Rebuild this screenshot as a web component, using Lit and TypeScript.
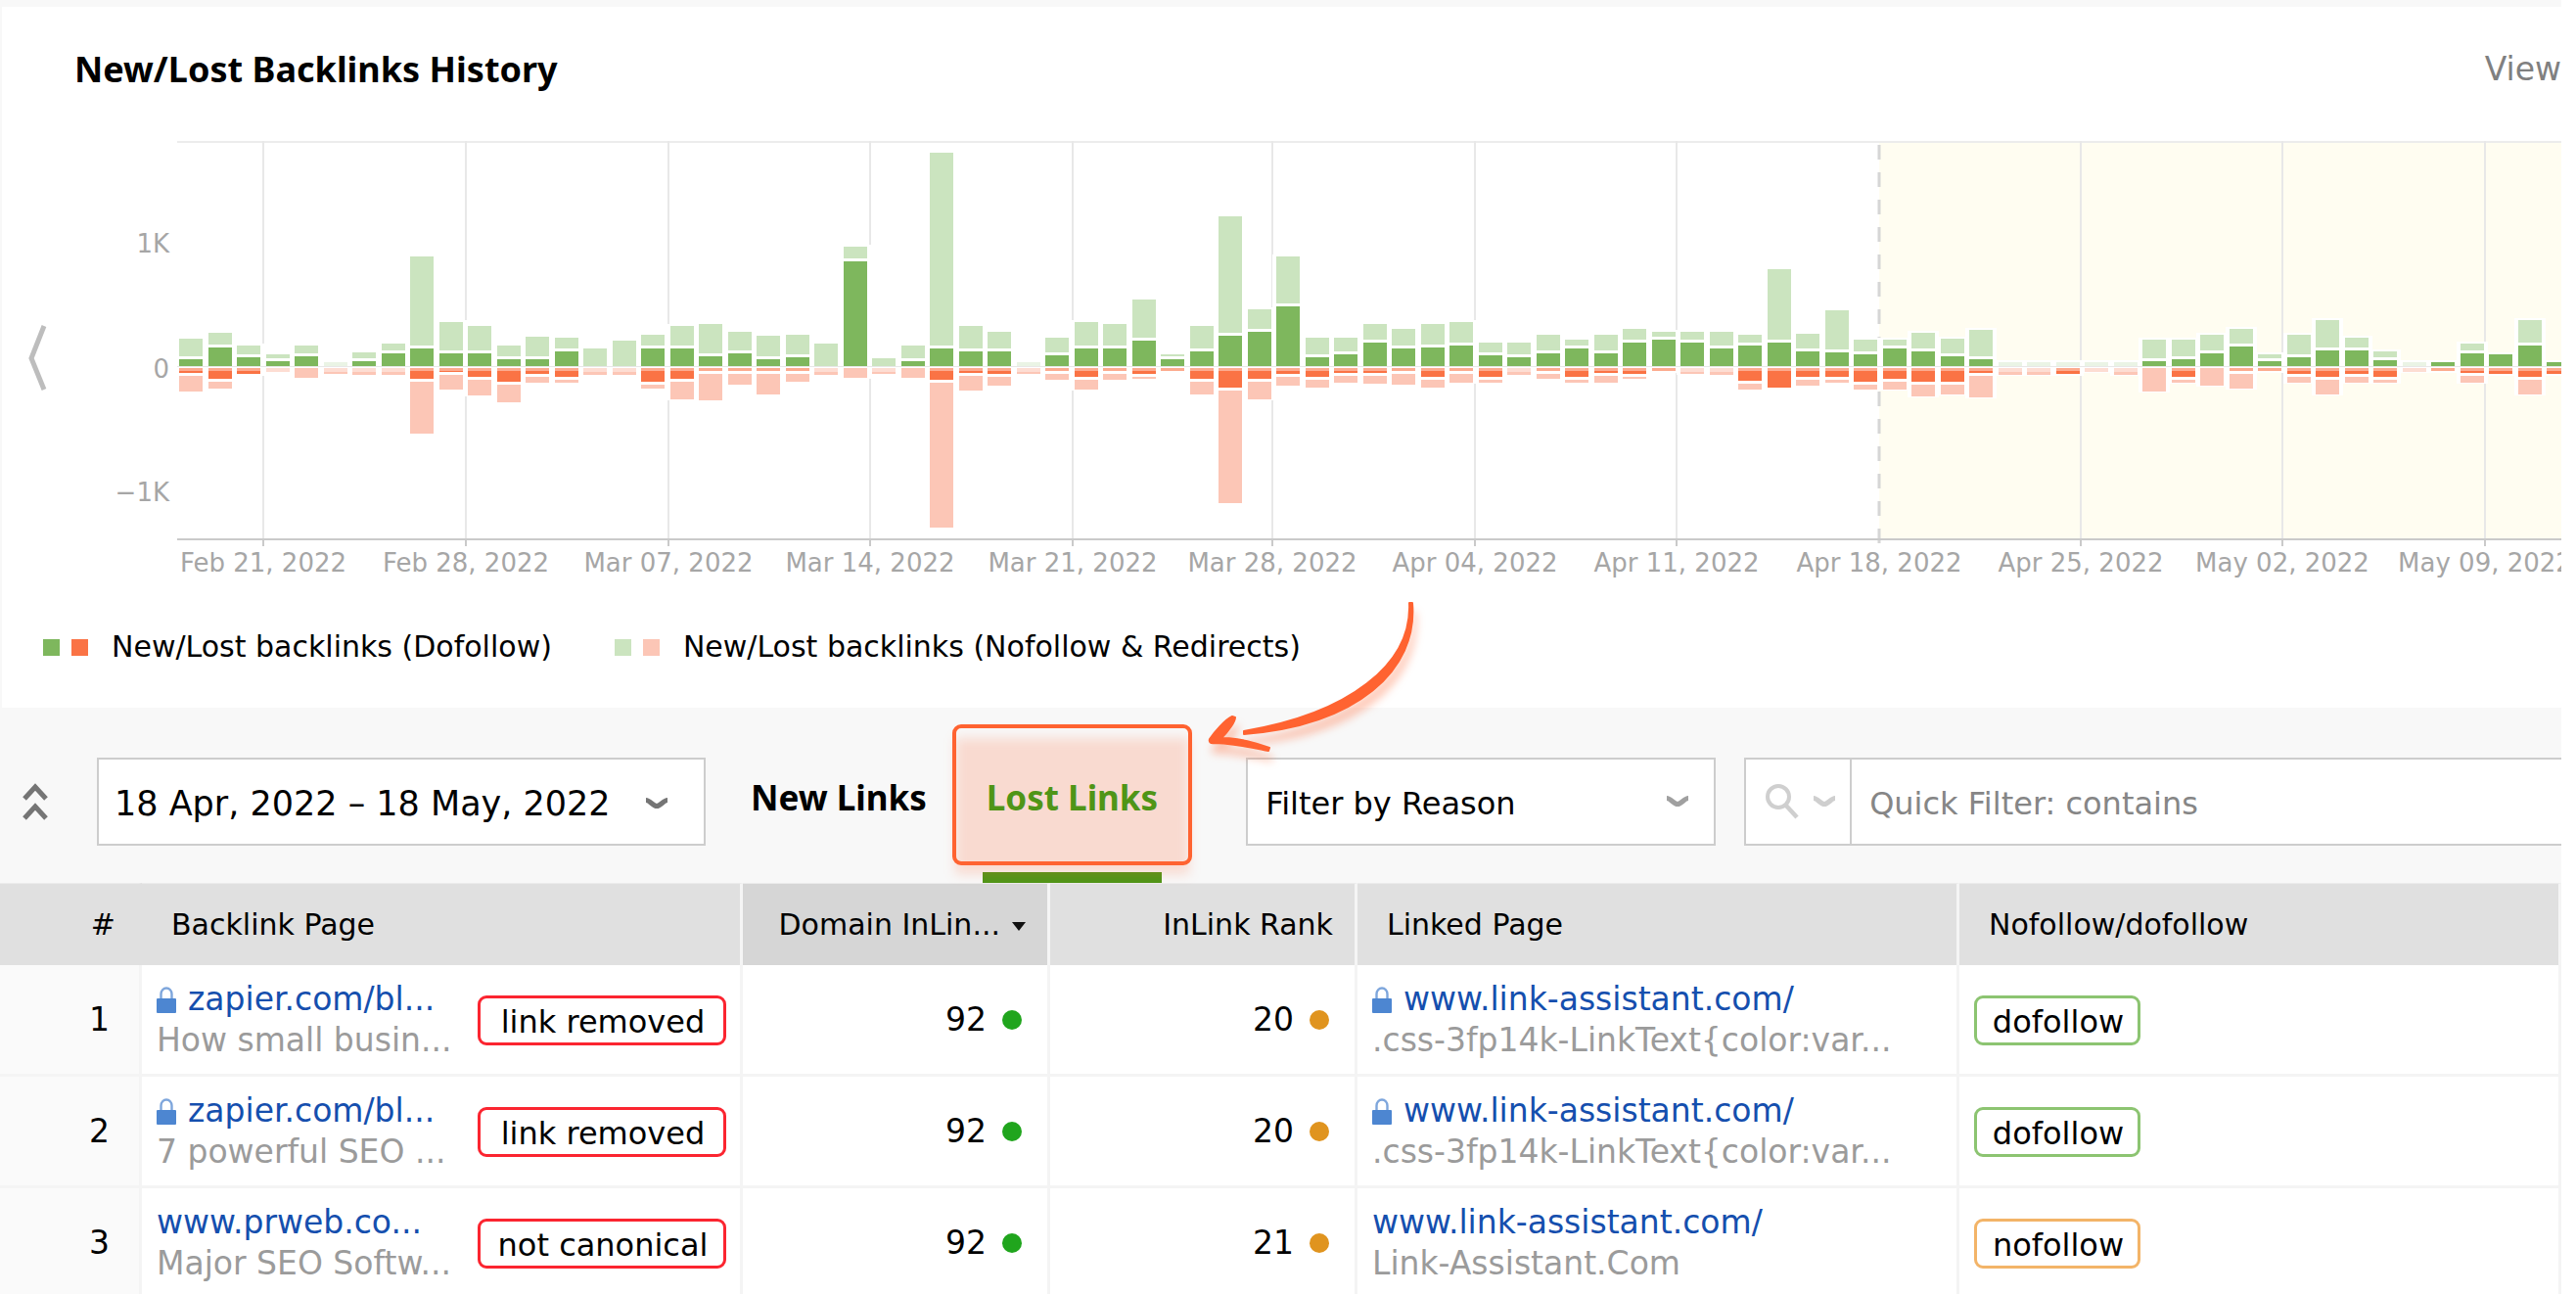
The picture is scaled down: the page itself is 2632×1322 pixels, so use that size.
import { LitElement, html, css, svg } from "lit";
import { customElement, state } from "lit/decorators.js";
import { classMap } from "lit/directives/class-map.js";

/* One day: new total, new dofollow, lost dofollow, lost total (381 units = 1K links). */
type Day = [number, number, number, number];

const DAYS: Day[] = [
  [83, 20, 22, 75], [101, 58, 38, 67], [63, 28, 24, 0], [36, 14, 0, 14],
  [63, 30, 0, 32], [11, 0, 0, 20], [43, 14, 0, 24], [70, 38, 0, 24],
  [336, 54, 38, 204], [136, 38, 19, 70], [123, 38, 32, 87], [63, 20, 47, 109],
  [91, 20, 24, 49], [88, 45, 32, 49], [54, 0, 0, 24], [79, 0, 0, 24],
  [95, 54, 49, 65], [123, 53, 38, 100], [130, 30, 14, 102], [105, 38, 14, 55],
  [93, 22, 14, 83], [95, 27, 14, 44], [70, 0, 0, 24], [366, 320, 0, 32],
  [24, 0, 0, 20], [63, 14, 0, 32], [654, 54, 41, 493], [123, 45, 22, 73],
  [106, 45, 24, 57], [13, 0, 0, 22], [88, 32, 14, 39], [136, 53, 32, 70],
  [130, 53, 14, 39], [203, 79, 24, 33], [37, 20, 14, 0], [123, 46, 38, 84],
  [459, 93, 65, 417], [175, 106, 38, 100], [336, 182, 24, 57], [86, 28, 32, 62],
  [88, 37, 22, 47], [130, 71, 22, 50], [115, 54, 14, 54], [130, 58, 32, 62],
  [136, 62, 14, 49], [72, 32, 32, 47], [72, 27, 0, 24], [95, 38, 14, 35],
  [81, 54, 32, 49], [95, 38, 22, 49], [113, 72, 24, 35], [106, 80, 15, 0],
  [105, 72, 0, 22], [106, 53, 0, 24], [96, 63, 45, 69], [298, 72, 67, 0],
  [98, 45, 32, 57], [170, 42, 32, 49], [81, 36, 49, 69], [81, 54, 38, 69],
  [103, 45, 47, 89], [83, 29, 49, 83], [111, 22, 22, 92], [11, 0, 0, 24],
  [11, 0, 0, 24], [11, 0, 24, 0], [11, 0, 0, 14], [11, 0, 0, 24],
  [81, 14, 0, 75], [81, 20, 32, 47], [95, 38, 0, 57], [114, 61, 14, 66],
  [37, 16, 14, 0], [95, 28, 25, 47], [140, 47, 32, 83], [88, 47, 24, 47],
  [45, 18, 32, 49], [13, 0, 0, 15], [13, 13, 14, 0], [70, 38, 22, 49],
  [35, 35, 24, 0], [140, 62, 32, 83], [13, 13, 24, 0],
];

const WEEKS: [number, string][] = [
  [159, "Feb 21, 2022"], [366, "Feb 28, 2022"], [573, "Mar 07, 2022"],
  [779, "Mar 14, 2022"], [986, "Mar 21, 2022"], [1190, "Mar 28, 2022"],
  [1397, "Apr 04, 2022"], [1603, "Apr 11, 2022"], [1810, "Apr 18, 2022"],
  [2016, "Apr 25, 2022"], [2222, "May 02, 2022"], [2429, "May 09, 2022"],
];

const CHART = { left: 71, top: 14, zero: 244, bottom: 421, first: 73, step: 29.5, bar: 24 };
const RANGE_START = 1810;

@customElement("history-chart")
export class HistoryChart extends LitElement {
  static styles = css`
    :host {
      display: block;
      min-width: 0;
    }
    svg {
      display: block;
      width: 100%;
      height: 470px;
      overflow: hidden;
    }
    text {
      font: 26px "DejaVu Sans", sans-serif;
      fill: #a6a6a6;
    }
    .day { text-anchor: middle; }
    .tick { text-anchor: end; }
    .grid { fill: #e8e8e8; }
    .frame { fill: #ececec; }
    .axis { fill: #cacaca; }
    .range { fill: #fffdf1; }
    .range-start {
      stroke: #d6d6d6;
      stroke-width: 3;
      stroke-dasharray: 15 13;
    }
    .halo { fill: #fff; }
    .new { fill: #7eb75d; }
    .new-soft { fill: #cbe4bf; }
    .lost { fill: #fa7345; }
    .lost-soft { fill: #fcc6b6; }
    .fade { fill: #fff; opacity: 0.4; }
    .faint { opacity: 0.4; }
  `;

  private bar(d: Day, i: number) {
    const px = (v: number) => Math.round(v / 3);
    const [up, upDark, downDark, down] = d.map(px);
    const { zero, first, step, bar } = CHART;
    const x = Math.round(first + i * step);
    const deep = Math.max(down, downDark);
    const gapUp = upDark ? 3 : 0;
    const gapDown = downDark ? 2 : 1;
    return svg`
      <rect class="halo" x=${x - 4} y=${zero - up - 2} width=${bar + 8} height=${up + deep + 4}></rect>
      ${up > upDark + gapUp
        ? svg`<rect class=${up < 5 ? "new-soft faint" : "new-soft"} x=${x} y=${zero - up} width=${bar}
            height=${up - upDark - gapUp}></rect>`
        : null}
      ${upDark ? svg`<rect class="new" x=${x} y=${zero - upDark} width=${bar} height=${upDark}></rect>` : null}
      ${downDark
        ? svg`<rect class="lost" x=${x} y=${zero + 2} width=${bar} height=${downDark - 2}></rect>
            <rect class="fade" x=${x} y=${zero + 2} width=${bar} height="3"></rect>`
        : null}
      ${down > downDark + gapDown
        ? svg`<rect class="lost-soft" x=${x} y=${zero + downDark + gapDown + 1} width=${bar}
            height=${Math.max(2, down - downDark - gapDown)}></rect>`
        : null}
      ${down > 0 && down < 9 && !downDark
        ? svg`<rect class="fade" x=${x} y=${zero + 2} width=${bar} height="4"></rect>`
        : null}
    `;
  }

  render() {
    const { left, top, zero, bottom } = CHART;
    return html`<svg role="img" aria-label="New and lost backlinks per day">
      <rect class="range" x=${RANGE_START} y=${top} width="100%" height=${bottom - top}></rect>
      <rect class="frame" x=${left} y=${top} width="100%" height="2"></rect>
      ${WEEKS.map(([x]) =>
        x === RANGE_START
          ? svg`<line class="range-start" x1=${x} x2=${x} y1=${top + 4} y2=${bottom + 7}></line>`
          : svg`<rect class="grid" x=${x - 1} y=${top} width="2" height=${bottom - top}></rect>
              <rect class="axis" x=${x - 1} y=${bottom} width="2" height="7"></rect>`
      )}
      ${DAYS.map((d, i) => this.bar(d, i))}
      <rect class="grid" x=${left} y=${zero} width="100%" height="1"></rect>
      <rect class="axis" x=${left} y=${bottom - 1} width="100%" height="2"></rect>
      <text class="tick" x="63" y="128">1K</text>
      <text class="tick" x="63" y="256">0</text>
      <text class="tick" x="63" y="382">−1K</text>
      ${WEEKS.map(([x, label]) => svg`<text class="day" x=${x} y="454">${label}</text>`)}
    </svg>`;
  }
}

interface Link {
  page: string;
  title: string;
  secure: boolean;
  reason: string;
  domainRank: number;
  rank: number;
  target: string;
  anchor: string;
  follow: "dofollow" | "nofollow";
}

const LINKS: Link[] = [
  {
    page: "zapier.com/bl...", title: "How small busin...", secure: true, reason: "link removed",
    domainRank: 92, rank: 20, target: "www.link-assistant.com/",
    anchor: ".css-3fp14k-LinkText{color:var...", follow: "dofollow",
  },
  {
    page: "zapier.com/bl...", title: "7 powerful SEO ...", secure: true, reason: "link removed",
    domainRank: 92, rank: 20, target: "www.link-assistant.com/",
    anchor: ".css-3fp14k-LinkText{color:var...", follow: "dofollow",
  },
  {
    page: "www.prweb.co...", title: "Major SEO Softw...", secure: false, reason: "not canonical",
    domainRank: 92, rank: 21, target: "www.link-assistant.com/",
    anchor: "Link-Assistant.Com", follow: "nofollow",
  },
];

const chevron = html`<svg class="chevron" viewBox="0 0 24 12" aria-hidden="true">
  <path d="M1 2.5C5 2.5 8 8.5 12 8.5S19 2.5 23 2.5" fill="none" stroke="currentColor" stroke-width="5"></path>
</svg>`;

const lock = html`<svg class="lock" viewBox="0 0 20 27" aria-hidden="true">
  <path d="M4.5 13V7.5a5.5 6 0 0 1 11 0V13" fill="none" stroke="#7ea6dc" stroke-width="2.4"></path>
  <rect x="0" y="12" width="20" height="15" rx="1" fill="#4d86d1"></rect>
</svg>`;

@customElement("app-root")
export class AppRoot extends LitElement {
  @state() private tab: "new" | "lost" = "lost";

  static styles = css`
    :host {
      display: block;
      font: 33px/42px "DejaVu Sans", sans-serif;
      color: #000;
      background: #fff;
    }
    * { box-sizing: border-box; }
    button, input, select {
      font: inherit;
      color: inherit;
      margin: 0;
      padding: 0;
      border: 0;
      border-radius: 0;
      background: none;
    }
    .page {
      height: 100vh;
      overflow: hidden;
      margin-right: 15px;
      background: #f8f8f8;
      border-top: 7px solid #f8f8f8;
    }

    .history {
      background: #fff;
      border-left: 2px solid #f8f8f8;
      padding-top: 40px;
      padding-bottom: 42px;
    }
    .history-head {
      display: flex;
      justify-content: space-between;
      align-items: center;
      height: 48px;
      padding-left: 74px;
      margin-bottom: 35px;
    }
    h1 {
      margin: 0;
      font: bold 36px/48px "Noto Sans", sans-serif;
    }
    .view { color: #808080; }
    .chart-row {
      display: grid;
      grid-template-columns: 108px minmax(0, 1fr);
    }
    .prev {
      display: flex;
      align-items: center;
      padding-left: 26px;
    }
    .prev svg { width: 20px; height: 70px; }
    .legend {
      display: flex;
      gap: 64px;
      list-style: none;
      margin: 41px 0 0;
      padding: 0 0 0 42px;
      font-size: 30px;
      line-height: 40px;
    }
    .legend li {
      display: flex;
      align-items: center;
      gap: 12px;
    }
    .legend span { margin-left: 12px; }
    .swatch { width: 17px; height: 17px; }
    .green { background: #7eb75d; }
    .red { background: #fa7345; }
    .green-soft { background: #cbe4bf; }
    .red-soft { background: #fcc6b6; }

    .toolbar {
      display: flex;
      height: 179px;
      padding-left: 23px;
    }
    .collapse {
      width: 26px;
      height: 90px;
      margin: 51px 50px 0 0;
      color: #757575;
    }
    .collapse svg { display: block; width: 26px; }
    .field {
      height: 90px;
      margin-top: 51px;
      border: 2px solid #cdcdcd;
      background: #fff;
      font-size: 32px;
    }
    .chevron { width: 24px; height: 12px; flex: none; }
    .date {
      display: flex;
      align-items: center;
      justify-content: space-between;
      width: 622px;
      padding: 4px 36px 0 16px;
      font-size: 35px;
    }
    .date .chevron { color: #757575; }
    .tabs {
      display: flex;
      gap: 53px;
      margin-left: 42px;
    }
    .tab {
      position: relative;
      padding: 16px 4px 0;
      border-bottom: 11px solid transparent;
      font: bold 35px/48px "Noto Sans", sans-serif;
    }
    .tab.active {
      color: #4f9517;
      border-bottom-color: #4f9517;
    }
    .label { position: relative; }
    .callout {
      position: absolute;
      inset: 17px -31px 7px -31px;
      border: 4px solid #ff6331;
      border-radius: 9px;
      pointer-events: none;
    }
    .callout::before {
      content: "";
      position: absolute;
      inset: 10px -1px -13px;
      background: rgba(255, 99, 49, 0.2);
      filter: blur(6px);
    }
    .arrow {
      position: absolute;
      left: 222px;
      top: -118px;
      width: 230px;
      height: 180px;
      z-index: 1;
      overflow: visible;
      pointer-events: none;
      filter: drop-shadow(3px 10px 4px rgba(255, 99, 49, 0.35));
    }
    .reason {
      display: grid;
      align-items: center;
      width: 480px;
      margin-left: 86px;
      color: #000;
    }
    .reason > * { grid-area: 1 / 1; }
    .reason select {
      appearance: none;
      width: 100%;
      height: 100%;
      padding: 3px 60px 0 18px;
    }
    .reason .chevron {
      justify-self: end;
      margin-right: 25px;
      color: #a0a0a0;
      pointer-events: none;
    }
    .search {
      display: flex;
      flex: 1;
      min-width: 0;
      margin-left: 29px;
      border-right: 0;
    }
    .search button {
      display: flex;
      align-items: center;
      gap: 14px;
      width: 108px;
      padding-left: 20px;
      border-right: 2px solid #cdcdcd;
      color: #cfcfcf;
    }
    .glass { width: 34px; height: 36px; flex: none; }
    .search input {
      flex: 1;
      min-width: 0;
      padding: 3px 0 0 18px;
      outline: 0;
    }
    .search input::placeholder { color: #868686; opacity: 1; }

    table {
      width: 100%;
      table-layout: fixed;
      border-collapse: separate;
      border-spacing: 0;
      background: #fff;
    }
    .c-num { width: 145px; }
    .c-page { width: 614px; }
    .c-rank { width: 314px; }
    th {
      height: 84px;
      padding: 0 29px 0 30px;
      border-right: 3px solid #f5f5f5;
      border-top: 1px solid #ebebeb;
      background: #e0e0e0;
      font-size: 30px;
      font-weight: normal;
      text-align: left;
      white-space: nowrap;
    }
    th:first-child { border-right-color: #e0e0e0; }
    th.sorted { background: #d6d6d6; }
    th.end { text-align: right; padding: 0 22px 0 0; }
    .sort {
      display: inline-block;
      vertical-align: middle;
      margin-left: 12px;
      border: 7px solid transparent;
      border-top: 9px solid #111;
      border-bottom: 0;
    }
    td {
      height: 114px;
      padding: 1px 14px 0 15px;
      border-right: 3px solid #f4f4f4;
      border-bottom: 3px solid #f4f4f4;
      white-space: nowrap;
    }
    .num { background: #fafafa; text-align: right; padding-right: 30px; }
    th.num { background: #e0e0e0; padding-right: 24px; }
    .metric { text-align: right; padding-right: 26px; }
    .dot {
      display: inline-block;
      width: 20px;
      height: 20px;
      margin-left: 16px;
      border-radius: 50%;
      vertical-align: middle;
      margin-bottom: 4px;
    }
    .good { background: #20a51d; }
    .fair { background: #e0941f; }
    .source {
      display: flex;
      align-items: center;
      justify-content: space-between;
    }
    .link {
      display: flex;
      align-items: center;
      gap: 12px;
    }
    a { color: #154fae; text-decoration: none; }
    .sub { color: #9b9b9b; }
    .lock { width: 20px; height: 27px; flex: none; }
    .badge {
      display: inline-flex;
      justify-content: center;
      align-items: center;
      width: 170px;
      height: 51px;
      padding: 4px 0 0 2px;
      border: 3px solid;
      border-radius: 9px;
      font-size: 32px;
    }
    .text { color: #000; }
    .reason-badge { width: 254px; border-color: #fb2530; }
    .dofollow { border-color: #8cc471; }
    .nofollow { border-color: #f3b468; }
  `;

  private tabButton(id: "new" | "lost", label: string) {
    const active = this.tab === id;
    return html`<button
      class=${classMap({ tab: true, active })}
      role="tab"
      aria-selected=${active ? "true" : "false"}
      @click=${() => (this.tab = id)}
    >
      ${id === "lost"
        ? html`<i class="callout"></i>
            <svg class="arrow" viewBox="0 0 230 180" aria-hidden="true">
              <g fill="#ff6331" stroke="#ff6331" stroke-width="2" stroke-linejoin="round" stroke-linecap="round">
                <path d="M214 11C217 74 152 124 45 142L45 145C160 136 223 80 217 11Z"></path>
                <path d="M33 127C26 130 15 143 10 150C9 153 11 155 15 154C40 155 55 159 70 162L71 159C52 152 36 149 22 149C30 141 36 132 36 128Z"></path>
              </g>
            </svg>`
        : null}
      <span class="label">${label}</span>
    </button>`;
  }

  render() {
    return html`<main class="page">
      <section class="history">
        <header class="history-head">
          <h1>New/Lost Backlinks History</h1>
          <span class="view">View</span>
        </header>
        <div class="chart-row">
          <button class="prev" aria-label="Earlier dates">
            <svg viewBox="0 0 20 70" aria-hidden="true">
              <path d="M17 3L4 36L17 68" fill="none" stroke="#bdbdbd" stroke-width="5"></path>
            </svg>
          </button>
          <history-chart></history-chart>
        </div>
        <ul class="legend">
          <li>
            <i class="swatch green"></i><i class="swatch red"></i>
            <span>New/Lost backlinks (Dofollow)</span>
          </li>
          <li>
            <i class="swatch green-soft"></i><i class="swatch red-soft"></i>
            <span>New/Lost backlinks (Nofollow &amp; Redirects)</span>
          </li>
        </ul>
      </section>

      <section class="toolbar">
        <button class="collapse" aria-label="Collapse chart">
          <svg viewBox="0 0 26 38" aria-hidden="true">
            <path d="M2 16L13 4L24 16M2 36L13 24L24 36" fill="none" stroke="currentColor" stroke-width="5"></path>
          </svg>
        </button>
        <button class="field date">18 Apr, 2022 – 18 May, 2022 ${chevron}</button>
        <div class="tabs" role="tablist">
          ${this.tabButton("new", "New Links")} ${this.tabButton("lost", "Lost Links")}
        </div>
        <div class="field reason">
          <select aria-label="Filter by Reason">
            <option>Filter by Reason</option>
          </select>
          ${chevron}
        </div>
        <div class="field search">
          <button aria-label="Search options">
            <svg class="glass" viewBox="0 0 34 36" aria-hidden="true">
              <circle cx="13" cy="13" r="11" fill="none" stroke="currentColor" stroke-width="4"></circle>
              <path d="M21 22L32 34" stroke="currentColor" stroke-width="4.5"></path>
            </svg>
            ${chevron}
          </button>
          <input type="text" aria-label="Quick Filter" placeholder="Quick Filter: contains" />
        </div>
      </section>

      <table>
        <colgroup>
          <col class="c-num" /><col class="c-page" /><col class="c-rank" /><col class="c-rank" /><col /><col />
        </colgroup>
        <thead>
          <tr>
            <th class="num">#</th>
            <th>Backlink Page</th>
            <th class="sorted end">Domain InLin...<i class="sort"></i></th>
            <th class="end">InLink Rank</th>
            <th>Linked Page</th>
            <th>Nofollow/dofollow</th>
          </tr>
        </thead>
        <tbody>
          ${LINKS.map(
            (l, i) => html`<tr>
              <td class="num">${i + 1}</td>
              <td>
                <div class="source">
                  <div>
                    <div class="link">${l.secure ? lock : null}<a href="#">${l.page}</a></div>
                    <div class="sub">${l.title}</div>
                  </div>
                  <span class="badge reason-badge"><span class="text">${l.reason}</span></span>
                </div>
              </td>
              <td class="metric">${l.domainRank}<i class="dot good"></i></td>
              <td class="metric">${l.rank}<i class="dot fair"></i></td>
              <td>
                <div class="link">${l.secure ? lock : null}<a href="#">${l.target}</a></div>
                <div class="sub">${l.anchor}</div>
              </td>
              <td><span class="badge ${l.follow}"><span class="text">${l.follow}</span></span></td>
            </tr>`
          )}
        </tbody>
      </table>
    </main>`;
  }
}
